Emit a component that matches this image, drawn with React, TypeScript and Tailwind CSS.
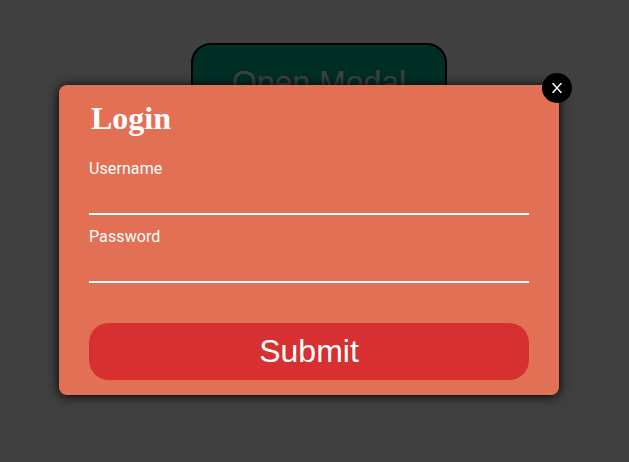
export default function App() {
  return (
    <div className="relative h-[462px] w-full overflow-hidden bg-white font-['Roboto',sans-serif]">
      <div className="flex justify-center pt-[43px] pl-[9px]">
        <button className="h-[78px] w-[256px] rounded-[20px] border-2 border-black bg-[#00b894] font-['Liberation_Sans',sans-serif] text-[32px] text-white">
          Open Modal
        </button>
      </div>
      <div className="absolute inset-0 bg-black/75" />
      <div className="absolute top-[85px] left-[59px] flex h-[310px] w-[500px] flex-col rounded-lg bg-[#e17055] px-[30px] text-white shadow-[0_1px_12px_black]">
        <h1 className="mt-[15px] ml-[2px] font-['Liberation_Serif',serif] text-[32px] leading-[37px] font-bold">Login</h1>
        <label className="mt-[22px] text-base leading-[19px] tracking-[0.1px]">Username</label>
        <input className="h-[37px] w-full border-b-2 border-white bg-transparent outline-none" />
        <label className="mt-3 text-base leading-[19px] tracking-[0.1px]">Password</label>
        <input className="h-[37px] w-full border-b-2 border-white bg-transparent outline-none" type="password" />
        <button className="mt-10 h-[57px] w-full rounded-[20px] bg-[#d63031] pb-0.5 font-['Liberation_Sans',sans-serif] text-[32px]">Submit</button>
        <button aria-label="Close" className="absolute -top-3 -right-[13px] flex size-[30px] items-center justify-center rounded-full bg-black">
          <svg viewBox="0 0 10 10" className="size-[10px]" fill="none" stroke="currentColor" strokeWidth="1.5">
            <path d="M0.5 0 L9.5 10 M9.5 0 L0.5 10" />
          </svg>
        </button>
      </div>
    </div>
  );
}
